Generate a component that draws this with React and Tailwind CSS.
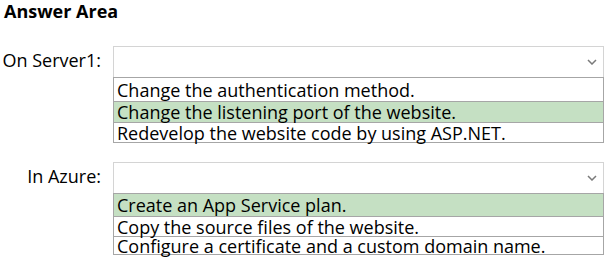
import React from "react";

const groups = [
  {
    label: "On Server1:",
    options: [
      "Change the authentication method.",
      "Change the listening port of the website.",
      "Redevelop the website code by using ASP.NET.",
    ],
    rows: ["h-[24px]", "h-[21px]", "h-[20px]"],
    selected: 1,
    mt: "mt-[25px]",
  },
  {
    label: "In Azure:",
    options: [
      "Create an App Service plan.",
      "Copy the source files of the website.",
      "Configure a certificate and a custom domain name.",
    ],
    rows: ["h-[23px]", "h-[20px]", "h-[18px]"],
    selected: 0,
    mt: "mt-[19px]",
  },
];

function Chevron() {
  return (
    <svg width="10" height="6" viewBox="0 0 10 6" className="text-[#7a7a7a]">
      <path d="M1 1 L5 5 L9 1" fill="none" stroke="currentColor" strokeWidth="1.5" />
    </svg>
  );
}

function DropGroup({ group }) {
  return (
    <div className={`flex ${group.mt}`}>
      <div className="w-[113px] pr-[12px] pt-[2px] text-right text-[18px] leading-[24px] text-black">
        {group.label}
      </div>
      <div className="w-[491px]">
        <div className="h-[32px] border border-[#d4d4d4] bg-white flex items-center justify-end pr-[6px]">
          <Chevron />
        </div>
        <div className="border-x border-b border-[#a6a6a6] -mt-px">
          {group.options.map((opt, i) => (
            <div
              key={i}
              className={`${group.rows[i]} flex items-center pl-[3px] text-[18px] leading-[16px] text-black border-t border-[#a6a6a6] whitespace-nowrap ${
                i === group.selected ? "bg-[#c5e0c3]" : "bg-white"
              }`}
            >
              {opt}
            </div>
          ))}
        </div>
      </div>
    </div>
  );
}

export default function App() {
  return (
    <div
      className="w-[608px] h-[265px] bg-white overflow-hidden pt-[1px]"
      style={{ fontFamily: '"Open Sans", "Noto Sans", sans-serif' }}
    >
      <div className="text-[18px] font-bold leading-[20px] text-black pl-[4px]">Answer Area</div>
      {groups.map((g, i) => (
        <DropGroup key={i} group={g} />
      ))}
    </div>
  );
}
